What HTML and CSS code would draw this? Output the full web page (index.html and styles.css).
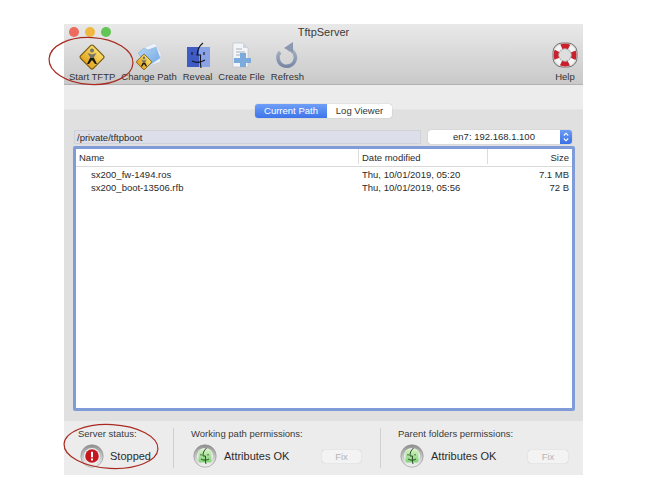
FILE: index.html
```html
<!DOCTYPE html>
<html lang="en">
<head>
<meta charset="utf-8">
<title>TftpServer</title>
<link rel="stylesheet" href="styles.css">
</head>
<body>
<svg class="defs" width="0" height="0" aria-hidden="true">
  <defs>
    <linearGradient id="gold" x1="0" y1="0" x2="0" y2="1">
      <stop offset="0" stop-color="#f7dc6a"/><stop offset="1" stop-color="#e2a51f"/>
    </linearGradient>
    <linearGradient id="fold" x1="0" y1="0" x2="1" y2="1">
      <stop offset="0" stop-color="#b9d6f4"/><stop offset="1" stop-color="#6ea6e4"/>
    </linearGradient>
    <linearGradient id="ring" x1="0" y1="0" x2="0" y2="1">
      <stop offset="0" stop-color="#8f8f8f"/><stop offset=".55" stop-color="#c9c9c9"/><stop offset="1" stop-color="#f4f4f4"/>
    </linearGradient>
    <linearGradient id="leaf" x1="0" y1="0" x2="0" y2="1">
      <stop offset="0" stop-color="#d5f0c2"/><stop offset="1" stop-color="#7dd473"/>
    </linearGradient>
    <linearGradient id="refresh" x1="0" y1="0" x2="0" y2="1">
      <stop offset="0" stop-color="#aab4c4"/><stop offset="1" stop-color="#7888a6"/>
    </linearGradient>
    <symbol id="warn" viewBox="0 0 30 30">
      <rect x="6" y="6" width="18" height="18" rx="2" transform="rotate(45 15 15)" fill="url(#gold)" stroke="#7a5a12" stroke-width="1.2"/>
      <circle cx="15" cy="8.500" r="2" fill="#77736a"/>
      <path d="M10.500 11l4.500 1.500 4.500-1.500-2.500 4v1H13v-1z" fill="#77736a"/>
      <path d="M13 16h4l3 6h-2l-3-4-3 4h-2z" fill="#1d1a12"/>
    </symbol>
    <symbol id="ring-badge" viewBox="0 0 24 24">
      <circle cx="12" cy="12" r="11.200" fill="url(#ring)" stroke="#8c8c8c" stroke-width=".6"/>
      <circle cx="12" cy="12" r="8" fill="#f0f0f0"/>
    </symbol>
    <symbol id="ok" viewBox="0 0 24 24">
      <use href="#ring-badge" width="24" height="24"/>
      <rect x="5.500" y="5.500" width="13" height="13" rx="2" fill="url(#leaf)"/>
      <path d="M13.500 4c-3 3-3.500 5-3.500 8h2.500c0 3-.5 5 .5 8M8 10v1.500M15 10v1.500M8 15c2 1.500 6 1.500 8 0" fill="none" stroke="#2e4d2a" stroke-width="1"/>
    </symbol>
  </defs>
</svg>

<main class="window">
  <header class="toolbar">
    <div class="titlebar">
      <span class="light light-red"></span>
      <span class="light light-yellow"></span>
      <span class="light light-green"></span>
      <h1 class="title">TftpServer</h1>
    </div>
    <nav class="tools">
      <div class="tool">
        <svg class="tool-icon" viewBox="0 0 30 30"><use href="#warn" x="0" y="2" width="30" height="30"/></svg>
        <span>Start TFTP</span>
      </div>
      <div class="tool">
        <svg class="tool-icon" viewBox="0 0 30 30">
          <path d="M10 8l11-5 6 11-1 8-12 4z" fill="#eef3fa" stroke="#c7d3e3" stroke-width=".6"/>
          <path d="M4 13l6-5 4 2 8-3 4 11-12 8z" fill="url(#fold)" stroke="#7ea8d6" stroke-width=".5"/>
          <use href="#warn" x="0.500" y="12.500" width="19" height="19"/>
        </svg>
        <span>Change Path</span>
      </div>
      <div class="tool">
        <svg class="tool-icon" viewBox="0 0 30 30">
          <rect x="4" y="7" width="12" height="20" fill="#3f5cc4"/>
          <rect x="16" y="7" width="11" height="20" fill="#8aa2e6"/>
          <path d="M20 3c-4 3-5.500 7-6 12h3.500c0 4-.5 8 .5 13M9 12v3M21 12v3M9 21c4 2 8 2 13-1" fill="none" stroke="#14151f" stroke-width="1.100"/>
        </svg>
        <span>Reveal</span>
      </div>
      <div class="tool">
        <svg class="tool-icon" viewBox="0 0 30 30">
          <path d="M6 3h10l5 5v19H6z" fill="#f3f5f8" stroke="#b5bcc6" stroke-width=".6"/>
          <path d="M16 3v5h5z" fill="#cfd6df"/>
          <path d="M9 9h6M9 12h9M9 15h9" stroke="#a9b1bc" stroke-width="1"/>
          <path d="M13 13h6v5h5v5h-5v4h-6v-4H7v-5h6z" fill="#7aabdc"/>
        </svg>
        <span>Create File</span>
      </div>
      <div class="tool">
        <svg class="tool-icon" viewBox="0 0 30 30">
          <path d="M8 12a8.700 8.700 0 1 0 8-3" fill="none" stroke="url(#refresh)" stroke-width="3.500"/>
          <path d="M12 8l9-6v11z" fill="#8b98b0"/>
        </svg>
        <span>Refresh</span>
      </div>
      <div class="tool tool-help">
        <svg class="tool-icon" viewBox="0 0 30 30">
          <rect x="3" y="3" width="24" height="24" rx="9" fill="#d4d4d4" stroke="#5d5d5d" stroke-width=".8"/>
          <circle cx="15" cy="15" r="9" fill="none" stroke="#f4f4f4" stroke-width="5"/>
          <circle cx="15" cy="15" r="9" fill="none" stroke="#c8202c" stroke-width="5" stroke-dasharray="8 6.140" stroke-dashoffset="4"/>
          <circle cx="15" cy="15" r="6.500" fill="#8d8d8d"/>
          <circle cx="15" cy="15" r="6" fill="#dedede"/>
        </svg>
        <span>Help</span>
      </div>
    </nav>
  </header>

  <div class="tab-band"></div>

  <section class="main">
    <div class="tabs">
      <span class="tab tab-active">Current Path</span>
      <span class="tab">Log Viewer</span>
    </div>
    <div class="path-row">
      <div class="path-field">/private/tftpboot</div>
      <div class="select">
        <span class="select-value">en7: 192.168.1.100</span>
        <span class="select-cap">
          <svg width="6" height="10" viewBox="0 0 6 10"><path d="M.8 3.500L3 1.200l2.200 2.300M.8 6.500L3 8.800l2.200-2.300" fill="none" stroke="#fff" stroke-width="1.100"/></svg>
        </span>
      </div>
    </div>
    <div class="table">
      <div class="row row-head">
        <span class="cell cell-name">Name</span>
        <span class="cell cell-date">Date modified</span>
        <span class="cell cell-size">Size</span>
      </div>
      <div class="row row-file">
        <span class="cell cell-name">sx200_fw-1494.ros</span>
        <span class="cell cell-date">Thu, 10/01/2019, 05:20</span>
        <span class="cell cell-size">7.1 MB</span>
      </div>
      <div class="row row-file">
        <span class="cell cell-name">sx200_boot-13506.rfb</span>
        <span class="cell cell-date">Thu, 10/01/2019, 05:56</span>
        <span class="cell cell-size">72 B</span>
      </div>
    </div>
  </section>

  <footer class="status">
    <div class="group group-server">
      <div class="group-label">Server status:</div>
      <div class="group-body">
        <svg class="badge" viewBox="0 0 24 24">
          <use href="#ring-badge" width="24" height="24"/>
          <circle cx="12" cy="12" r="6.800" fill="#c4161f"/>
          <rect x="11" y="7.800" width="2" height="5.500" fill="#fff"/>
          <rect x="11" y="14.500" width="2" height="2" fill="#fff"/>
        </svg>
        <span class="group-text">Stopped</span>
      </div>
    </div>
    <div class="group group-working">
      <div class="group-label">Working path permissions:</div>
      <div class="group-body">
        <svg class="badge" viewBox="0 0 24 24"><use href="#ok" width="24" height="24"/></svg>
        <span class="group-text">Attributes OK</span>
        <span class="fix">Fix</span>
      </div>
    </div>
    <div class="group group-parent">
      <div class="group-label">Parent folders permissions:</div>
      <div class="group-body">
        <svg class="badge" viewBox="0 0 24 24"><use href="#ok" width="24" height="24"/></svg>
        <span class="group-text">Attributes OK</span>
        <span class="fix">Fix</span>
      </div>
    </div>
  </footer>
</main>

<svg class="annotations" viewBox="0 0 647 500" aria-hidden="true">
  <ellipse cx="91" cy="61" rx="42" ry="23.500" transform="rotate(3 91 61)"/>
  <ellipse cx="111" cy="446.500" rx="47" ry="22" transform="rotate(3 111 446.500)"/>
</svg>
</body>
</html>
```

FILE: styles.css
```css
* { box-sizing: border-box; }

html, body {
  margin: 0;
  height: 500px;
  overflow: hidden;
  background: #fff;
}

body {
  position: relative;
  padding: 24px 0 0 64px;
  font-family: "Liberation Sans", Arial, sans-serif;
  font-size: 10px;
  color: #2b2b2b;
}

.defs { position: absolute; }

.window {
  width: 519px;
  height: 451px;
  display: flex;
  flex-direction: column;
  background: #ececec;
}

/* toolbar */
.toolbar {
  height: 61px;
  flex: none;
  background: linear-gradient(#e9e9e9, #c9c9c9);
  border-bottom: 1px solid #b2b2b2;
}

.titlebar {
  position: relative;
  height: 15px;
  display: flex;
  align-items: center;
  gap: 6px;
  padding: 1px 0 0 5px;
}

.light {
  width: 10px;
  height: 10px;
  border-radius: 50%;
  filter: blur(.3px);
}
.light-red { background: #ec6a5e; }
.light-yellow { background: #f0b840; }
.light-green { background: #62c554; }

.title {
  position: absolute;
  inset: 1px 0 0;
  margin: 0;
  text-align: center;
  font-size: 11px;
  font-weight: 400;
  line-height: 15px;
  color: #3a3a3a;
}

.tools {
  display: flex;
  gap: 6px;
  padding: 1px 8px 0 5px;
}

.tool {
  display: flex;
  flex-direction: column;
  align-items: center;
  font-size: 9.500px;
  line-height: 12px;
  white-space: nowrap;
  color: #333;
}

.tool-icon {
  width: 30px;
  height: 30px;
  margin: 0 -5px 1px;
  filter: blur(.4px);
}

.tool-help { margin-left: auto; }

.tab-band {
  height: 24px;
  flex: none;
  background: #ececec;
}

/* main panel */
.main {
  flex: 1;
  display: flex;
  flex-direction: column;
  padding: 0 8px 10px 9px;
  background: #e0e0e0;
  border-top: 1px solid #e5e5e5;
}

.tabs {
  align-self: center;
  display: flex;
  height: 14px;
  margin: -6px 0 12px -1px;
  border-radius: 3px;
  background: #fff;
  box-shadow: 0 0 1px rgba(0, 0, 0, .35);
  font-size: 9.500px;
  line-height: 14px;
  overflow: hidden;
}

.tab {
  width: 65px;
  text-align: center;
  color: #333;
}

.tab-active {
  width: 72px;
  background: linear-gradient(#6f9ff7, #3d74ea);
  color: #fff;
}

.path-row {
  display: flex;
  align-items: center;
  gap: 7px;
  height: 14px;
  padding-left: 1px;
  padding-right: 3px;
  margin-bottom: 2px;
}

.path-field {
  width: 347px;
  height: 14px;
  padding-left: 2px;
  background: #dcdfe9;
  border: 1px solid #d0d2da;
  font-size: 9.500px;
  line-height: 13px;
}

.select {
  flex: 1;
  height: 14px;
  display: flex;
  background: #fff;
  border-radius: 3px;
  box-shadow: 0 0 1px rgba(0, 0, 0, .3);
  overflow: hidden;
}

.select-value {
  flex: 1;
  text-align: center;
  font-size: 9.500px;
  line-height: 14px;
}

.select-cap {
  width: 12px;
  display: flex;
  align-items: center;
  justify-content: center;
  background: linear-gradient(#6c9cf6, #3a70e6);
}

.table {
  flex: 1;
  background: #fff;
  border: 3px solid #7f9cd9;
  border-radius: 2px;
  font-size: 9.500px;
}

.row {
  display: grid;
  grid-template-columns: 282px 129px 1fr;
  height: 13px;
  line-height: 13px;
}

.row-head {
  height: 18px;
  line-height: 17px;
  margin-bottom: 1px;
  border-bottom: 1px solid #d9d9d9;
}

.cell { white-space: nowrap; }
.cell-name { padding-left: 3px; }
.row-file .cell-name { padding-left: 15px; }
.cell-date { padding-left: 4px; }
.row-head .cell-date { padding-left: 3px; }
.cell-size { text-align: right; padding-right: 3px; }
.row-head .cell-date,
.row-head .cell-size { border-left: 1px solid #dcdcdc; }
.row-head .cell { height: 15px; }

/* status footer */
.status {
  height: 54px;
  flex: none;
  display: flex;
  padding-top: 7px;
  background: #ececec;
}

.group {
  height: 40px;
  display: flex;
  flex-direction: column;
  gap: 4px;
  font-size: 9.500px;
}

.group-server {
  width: 110px;
  padding-left: 14px;
  border-right: 1px solid #d0d0d0;
}

.group-working {
  width: 207px;
  padding-left: 17px;
  border-right: 1px solid #d0d0d0;
}

.group-parent {
  flex: 1;
  padding-left: 17px;
}

.group-label {
  height: 12px;
  line-height: 12px;
  color: #3a3a3a;
}

.group-body {
  display: flex;
  align-items: center;
  gap: 7px;
  height: 24px;
}

.group-server .group-body { padding-left: 2px; gap: 6px; }
.group-working .group-body,
.group-parent .group-body { padding-left: 2px; }

.badge {
  width: 24px;
  height: 24px;
  flex: none;
  filter: blur(.3px);
}

.group-text {
  font-size: 11px;
  color: #2b2b2b;
  white-space: nowrap;
}

.fix {
  width: 40px;
  height: 13px;
  margin-left: auto;
  margin-right: 15px;
  text-align: center;
  line-height: 13px;
  color: #b4b4b4;
  background: #f3f3f3;
  border-radius: 3px;
  box-shadow: 0 0 1px rgba(0, 0, 0, .25);
}

.group-working .fix {
  width: 39px;
  margin-right: 19px;
}

/* red hand-drawn circles on top of the window */
.annotations {
  position: absolute;
  inset: 0;
  width: 647px;
  height: 500px;
  pointer-events: none;
}

.annotations ellipse {
  fill: none;
  stroke: #a82a20;
  stroke-width: 1.200;
}
```
